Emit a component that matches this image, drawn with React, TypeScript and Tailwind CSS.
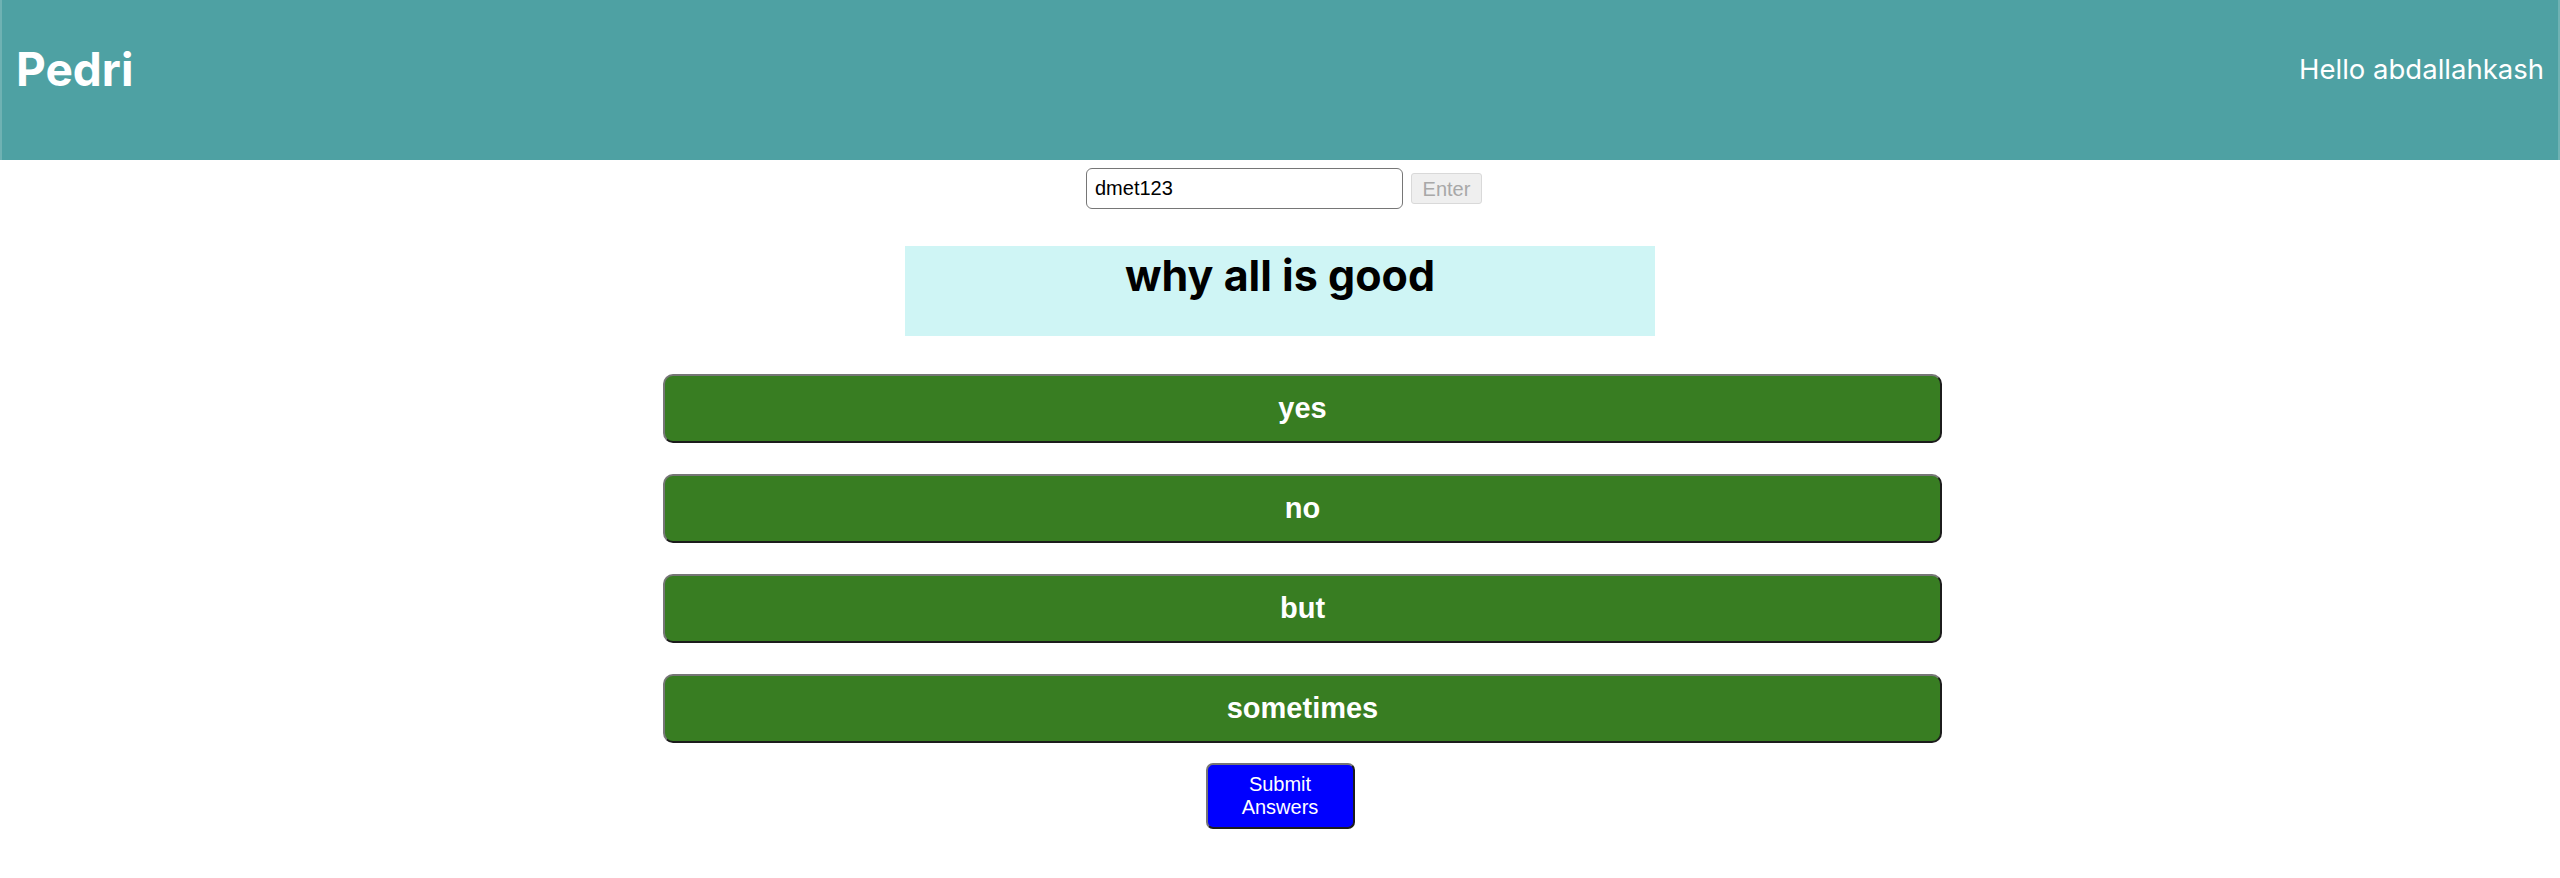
import React, { useState } from 'react';

const answers = ['yes', 'no', 'but', 'sometimes'];

function Header() {
  return (
    <header className="flex h-[160px] items-center justify-between border-x-2 border-[#6fb2b3] bg-[#4ea1a3] px-[14px] pb-[20px] font-['Inter',sans-serif] text-white">
      <h1 className="text-[46px] font-bold leading-[1.2]">Pedri</h1>
      <span className="text-[27.5px] font-normal">Hello abdallahkash</span>
    </header>
  );
}

function CodeForm() {
  const [code, setCode] = useState('dmet123');
  return (
    <div className="mt-[8px] flex items-center justify-center gap-[8px] pl-[8px] font-['Liberation_Sans',Arial,sans-serif]">
      <input
        type="text"
        value={code}
        onChange={(e) => setCode(e.target.value)}
        className="h-[41px] w-[317px] rounded-[6px] border border-[#767676] bg-white px-[8px] text-[20px] text-black outline-none"
      />
      <button
        disabled
        className="h-[31px] w-[71px] rounded-[3px] border border-[#d9d9d9] bg-[#efefef] text-[20px] text-[#a8a8a8]"
      >
        Enter
      </button>
    </div>
  );
}

export default function App() {
  const [picked, setPicked] = useState<string | null>(null);

  return (
    <div className="min-h-screen bg-white">
      <Header />
      <CodeForm />

      <div className="mx-auto mt-[37px] h-[90px] w-[750px] bg-[#cff5f5] pt-[3px] text-center font-['Inter',sans-serif]">
        <h2 className="text-[43px] font-bold leading-[1.21] text-black">why all is good</h2>
      </div>

      <div className="mt-[38px] flex justify-center pl-[45px]">
        <div className="flex w-[1279px] flex-col gap-[31px]">
          {answers.map((a) => (
            <button
              key={a}
              onClick={() => setPicked(a)}
              className={`h-[69px] w-full rounded-[10px] border-2 border-t-[#767676] border-l-[#767676] border-b-[#1c1c1c] border-r-[#1c1c1c] text-[29px] font-bold text-white font-['Liberation_Sans',Arial,sans-serif] ${
                picked === a ? 'bg-[#2f6b1c]' : 'bg-[#387d22]'
              }`}
            >
              {a}
            </button>
          ))}
        </div>
      </div>

      <div className="mt-[20px] flex justify-center">
        <button className="h-[66px] w-[149px] rounded-[7px] border-2 border-t-[#767676] border-l-[#767676] border-b-[#1c1c1c] border-r-[#1c1c1c] bg-[#0000ff] text-[20px] leading-[23px] text-white font-['Liberation_Sans',Arial,sans-serif]">
          Submit
          <br />
          Answers
        </button>
      </div>
    </div>
  );
}
